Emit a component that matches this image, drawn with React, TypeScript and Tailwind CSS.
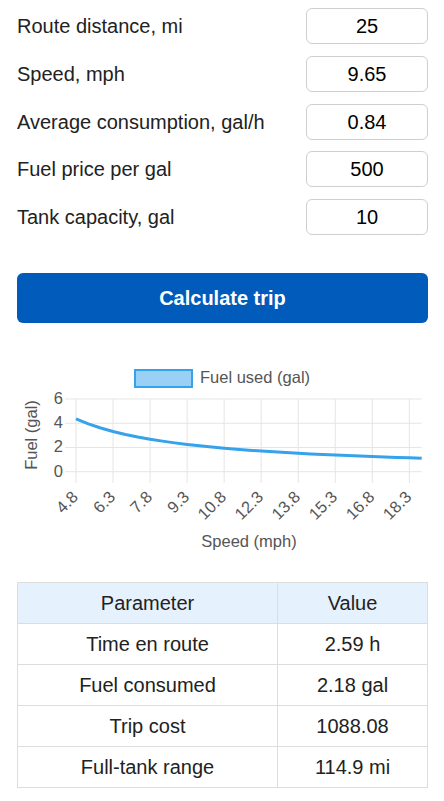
import React from 'react';

const FIELDS = [
    { label: 'Route distance, mi', value: '25' },
    { label: 'Speed, mph', value: '9.65' },
    { label: 'Average consumption, gal/h', value: '0.84' },
    { label: 'Fuel price per gal', value: '500' },
    { label: 'Tank capacity, gal', value: '10' },
];

const RESULTS = [
    ['Time en route', '2.59 h'],
    ['Fuel consumed', '2.18 gal'],
    ['Trip cost', '1088.08'],
    ['Full-tank range', '114.9 mi'],
];

// chart geometry in page coordinates
const X0 = 76;
const X1 = 421.7;
const Y_TOP = 399;
const Y_ZERO = 471.7;
const N = 29;
const speeds = Array.from({ length: N }, (_, i) => 4.825 + i * 0.5);
const xAt = (i: number) => X0 + ((X1 - X0) * i) / (N - 1);
const yAt = (f: number) => Y_ZERO - ((Y_ZERO - Y_TOP) * f) / 6;
const INK = '#555';

function FuelChart() {
    const pts = speeds.map((v, i) => [xAt(i), yAt((25 / v) * 0.84)]);
    let d = `M${pts[0][0]},${pts[0][1]}`;
    for (let i = 1; i < pts.length; i++) d += ` L${pts[i][0]},${pts[i][1]}`;
    const ticks = speeds.map((v, i) => ({ v, i })).filter(t => t.i % 3 === 0);

    return (
        <svg
            width="412"
            height="205"
            viewBox="16 355 412 205"
            className="block mt-[32px]"
            style={{ fontFamily: '"Liberation Sans", Arial, sans-serif' }}
        >
            {/* legend */}
            <rect x="135" y="370" width="57" height="17" fill="#9ad0f5" stroke="#36a2eb" strokeWidth="2" />
            <text x="200" y="378.5" fontSize="16.5" fill={INK} dominantBaseline="middle">Fuel used (gal)</text>

            {/* grid */}
            {[0, 2, 4, 6].map(f => (
                <g key={f}>
                    <line x1="65" x2={X1} y1={yAt(f)} y2={yAt(f)} stroke="#e5e5e5" strokeWidth="1" />
                    <text x="63" y={yAt(f) + 0.5} fontSize="16.5" fill={INK} textAnchor="end" dominantBaseline="middle">{f}</text>
                </g>
            ))}
            {ticks.map(t => (
                <g key={t.i}>
                    <line x1={xAt(t.i)} x2={xAt(t.i)} y1={Y_TOP} y2="483" stroke="#e5e5e5" strokeWidth="1" />
                    <text
                        x={xAt(t.i)}
                        y="495"
                        fontSize="16.5"
                        fill={INK}
                        textAnchor="end"
                        dominantBaseline="middle"
                        transform={`rotate(-45 ${xAt(t.i)} 495)`}
                    >
                        {t.v.toFixed(1)}
                    </text>
                </g>
            ))}

            {/* axis titles */}
            <text x="33" y="435" fontSize="16.5" fill={INK} textAnchor="middle" dominantBaseline="middle" transform="rotate(-90 33 435)">Fuel (gal)</text>
            <text x="249" y="543" fontSize="16.5" fill={INK} textAnchor="middle" dominantBaseline="middle">Speed (mph)</text>

            <path d={d} fill="none" stroke="#36a2eb" strokeWidth="3" strokeLinejoin="round" />
        </svg>
    );
}

export default function App() {
    return (
        <div className="w-[444px] px-[16px] pt-[8px] pb-4 bg-white text-[20px] text-[#222] font-['Liberation_Sans',Arial,sans-serif]">
            <div className="flex flex-col gap-[11.75px]">
                {FIELDS.map(f => (
                    <div key={f.label} className="flex items-center justify-between h-[36px]">
                        <span className="pl-[1px]">{f.label}</span>
                        <div className="w-[122px] h-[36px] border border-[#cfcfcf] rounded-[6px] flex items-center justify-center text-black">
                            {f.value}
                        </div>
                    </div>
                ))}
            </div>

            <button className="mt-[38px] ml-[1px] w-[411px] h-[50px] rounded-[6px] bg-[#005bbb] text-white font-bold text-[20px]">
                Calculate trip
            </button>

            <FuelChart />

            <table className="mt-[22px] ml-[1px] w-[411px] border-collapse text-center">
                <thead>
                    <tr className="bg-[#e5f1fc]">
                        <th className="w-[260px] h-[41px] border border-[#dddddd] font-normal">Parameter</th>
                        <th className="h-[41px] border border-[#dddddd] font-normal">Value</th>
                    </tr>
                </thead>
                <tbody>
                    {RESULTS.map(([k, v]) => (
                        <tr key={k}>
                            <td className="h-[41px] border border-[#dddddd]">{k}</td>
                            <td className="h-[41px] border border-[#dddddd]">{v}</td>
                        </tr>
                    ))}
                </tbody>
            </table>
        </div>
    );
}
